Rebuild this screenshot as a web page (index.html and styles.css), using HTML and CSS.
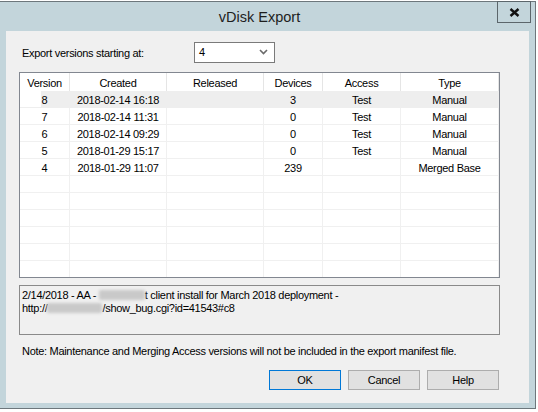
FILE: index.html
```html
<!DOCTYPE html>
<html>
<head>
<meta charset="utf-8">
<link rel="stylesheet" href="styles.css">
</head>
<body>
<div class="window">
  <div class="titlebar">
    <span class="title">vDisk Export</span>
    <div class="close">
      <svg width="11" height="9" viewBox="0 0 11 9"><path d="M1.5 1 L9.5 8 M9.5 1 L1.5 8" stroke="#111" stroke-width="2.4" stroke-linecap="butt"/></svg>
    </div>
  </div>
  <div class="client">
    <div class="pick">
      <span class="pick-label">Export versions starting at:</span>
      <div class="combo">
        <span>4</span>
        <svg width="9" height="6" viewBox="0 0 9 6"><path d="M1 1 L4.5 4.5 L8 1" stroke="#6a6a6a" stroke-width="1.6" fill="none"/></svg>
      </div>
    </div>
    <div class="list">
      <div class="grid">
        <div class="hd">Version</div><div class="hd">Created</div><div class="hd">Released</div><div class="hd">Devices</div><div class="hd">Access</div><div class="hd">Type</div>

        <div class="c sel first">8</div><div class="c sel">2018-02-14 16:18</div><div class="c sel"></div><div class="c sel">3</div><div class="c sel">Test</div><div class="c sel">Manual</div>
        <div class="c">7</div><div class="c">2018-02-14 11:31</div><div class="c"></div><div class="c">0</div><div class="c">Test</div><div class="c">Manual</div>
        <div class="c">6</div><div class="c">2018-02-14 09:29</div><div class="c"></div><div class="c">0</div><div class="c">Test</div><div class="c">Manual</div>
        <div class="c">5</div><div class="c">2018-01-29 15:17</div><div class="c"></div><div class="c">0</div><div class="c">Test</div><div class="c">Manual</div>
        <div class="c">4</div><div class="c">2018-01-29 11:07</div><div class="c"></div><div class="c">239</div><div class="c"></div><div class="c">Merged Base</div>

        <div class="c"></div><div class="c"></div><div class="c"></div><div class="c"></div><div class="c"></div><div class="c"></div>
        <div class="c"></div><div class="c"></div><div class="c"></div><div class="c"></div><div class="c"></div><div class="c"></div>
        <div class="c"></div><div class="c"></div><div class="c"></div><div class="c"></div><div class="c"></div><div class="c"></div>
        <div class="c"></div><div class="c"></div><div class="c"></div><div class="c"></div><div class="c"></div><div class="c"></div>
        <div class="c"></div><div class="c"></div><div class="c"></div><div class="c"></div><div class="c"></div><div class="c"></div>
        <div class="c"></div><div class="c"></div><div class="c"></div><div class="c"></div><div class="c"></div><div class="c"></div>
        <div class="c"></div><div class="c"></div><div class="c"></div><div class="c"></div><div class="c"></div><div class="c"></div>
      </div>
    </div>
    <div class="desc">
      <div>2/14/2018 - AA - <span class="blur b1"></span>t client install for March 2018 deployment -</div>
      <div>http://<span class="blur b2"></span>/show_bug.cgi?id=41543#c8</div>
    </div>
    <p class="note">Note: Maintenance and Merging Access versions will not be included in the export manifest file.</p>
    <div class="buttons">
      <button class="btn default">OK</button>
      <button class="btn">Cancel</button>
      <button class="btn">Help</button>
    </div>
  </div>
</div>
</body>
</html>
```

FILE: styles.css
```css
html, body {
  margin: 0;
  padding: 0;
  background: #ffffff;
}
body {
  font-family: "Liberation Sans", Arial, sans-serif;
  font-size: 11px;
  letter-spacing: -0.3px;
  color: #000;
}
.window {
  position: relative;
  margin-top: 1px;
  width: 529px;
  height: 401px;
  padding: 0 6px 5px 0;
  border-top: 1px solid #6d777c;
  border-right: 1px solid #6d777c;
  border-bottom: 1px solid #6d777c;
  background: #c3d5db;
}
.titlebar {
  height: 29px;
  display: flex;
  align-items: center;
  justify-content: center;
}
.title {
  font-size: 14.5px;
  letter-spacing: 0;
  color: #1e1e1e;
  margin-left: -10px;
  margin-top: 1px;
}
.close {
  position: absolute;
  left: 497px;
  top: -1px;
  width: 32px;
  height: 20px;
  border: 1px solid #5c666b;
  display: flex;
  align-items: center;
  justify-content: center;
}
.client {
  margin-left: 6px;
  width: 523px;
  height: 372px;
  background: #f0f0f0;
  display: flex;
  flex-direction: column;
}
.pick {
  display: flex;
  align-items: center;
  margin-top: 11px;
  height: 20px;
}
.pick-label {
  width: 172px;
  padding-left: 16px;
  padding-top: 1px;
}
.combo {
  box-sizing: border-box;
  width: 81px;
  height: 21px;
  border: 1px solid #7a7a7a;
  background: #fff;
  display: flex;
  align-items: center;
  justify-content: space-between;
  padding: 0 6px 0 4px;
}
.list {
  box-sizing: border-box;
  margin: 10px 0 0 13px;
  width: 481px;
  height: 206px;
  border: 1px solid #828790;
  background: #fff;
  overflow: hidden;
}
.grid {
  display: grid;
  grid-template-columns: 50px 97px 97px 59px 78px 98px;
  grid-auto-rows: 17px;
  grid-template-rows: 18px;
}
.hd {
  box-sizing: border-box;
  border-right: 1px solid #e5e5e5;
  display: flex;
  align-items: center;
  justify-content: center;
  padding-top: 1px;
  background: #fff;
}
.c {
  box-sizing: border-box;
  border-right: 1px solid #f0f0f0;
  border-bottom: 1px solid #f0f0f0;
  display: flex;
  align-items: center;
  justify-content: center;
  padding-top: 2px;
}
.sel {
  background: #eeeeee;
  border-color: #eeeeee;
}
.first {
  background: linear-gradient(to right, #fff 0 21px, #eeeeee 21px);
}
.desc {
  box-sizing: border-box;
  margin: 7px 0 0 13px;
  width: 481px;
  height: 50px;
  border: 1px solid #8a8a8a;
  padding: 3px 2px;
  line-height: 13px;
}
.blur {
  display: inline-block;
  height: 10px;
  vertical-align: -1px;
  background: #c9c9c9;
  filter: blur(1.5px);
  border-radius: 2px;
}
.b1 { width: 46px; }
.b2 { width: 55px; }
.note {
  margin: 10px 0 0 16px;
  line-height: 13px;
}
.buttons {
  display: flex;
  justify-content: flex-end;
  gap: 7px;
  margin-top: 12px;
  padding-right: 30px;
}
.btn {
  box-sizing: border-box;
  width: 72px;
  height: 20px;
  border: 1px solid #adadad;
  background: #e1e1e1;
  font-family: "Liberation Sans", Arial, sans-serif;
  font-size: 11px;
  letter-spacing: -0.3px;
  color: #000;
  padding: 0;
}
.btn.default {
  border-color: #0078d7;
}
```
